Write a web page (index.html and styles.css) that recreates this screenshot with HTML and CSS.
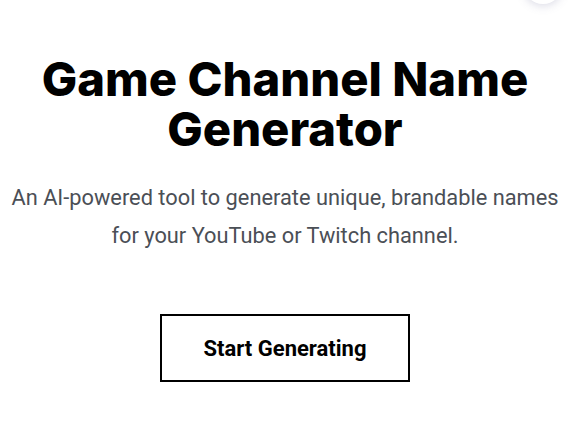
FILE: index.html
```
<!DOCTYPE html>
<html lang="en">
<head>
<meta charset="utf-8">
<link rel="stylesheet" href="styles.css">
</head>
<body>
<div class="fab"></div>
<main class="hero">
  <h1 class="title">Game Channel Name Generator</h1>
  <p class="subtitle">An AI-powered tool to generate unique, brandable names for your YouTube or Twitch channel.</p>
  <a class="cta" href="#">Start Generating</a>
</main>
</body>
</html>
```
FILE: styles.css
```
html, body {
  margin: 0;
  padding: 0;
  background: #ffffff;
}
body {
  width: 570px;
  height: 446px;
  overflow: hidden;
  position: relative;
}
.fab {
  position: absolute;
  top: -36px;
  left: 523px;
  width: 40px;
  height: 40px;
  border-radius: 50%;
  background: #fff;
  box-shadow: 0 2px 8px rgba(120, 120, 160, 0.25);
}
.hero {
  display: flex;
  flex-direction: column;
  align-items: center;
  padding-top: 54px;
}
.title {
  margin: 0;
  width: 540px;
  text-align: center;
  font-family: "Inter", sans-serif;
  font-weight: 800;
  font-size: 47.2px;
  line-height: 50px;
  letter-spacing: 0;
  color: #000;
}
.subtitle {
  margin: 25px 0 0;
  width: 562px;
  text-align: center;
  font-family: "Roboto", sans-serif;
  font-size: 21.8px;
  line-height: 38px;
  color: #4b4f56;
}
.cta {
  margin-top: 59px;
  width: 246px;
  height: 64px;
  border: 2px solid #000;
  display: flex;
  align-items: center;
  justify-content: center;
  font-family: "Roboto", sans-serif;
  font-weight: 700;
  font-size: 22px;
  color: #000;
  text-decoration: none;
}
```
